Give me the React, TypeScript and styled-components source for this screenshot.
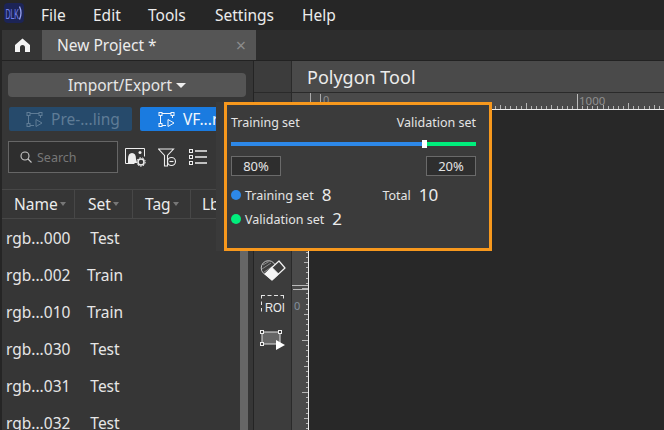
import * as React from 'react';
import styled, { createGlobalStyle } from 'styled-components';

const Global = createGlobalStyle`
  html, body { margin: 0; padding: 0; background: #252525; }
  * { box-sizing: border-box; }
`;

const Page = styled.div`
  position: relative;
  width: 664px;
  height: 430px;
  overflow: hidden;
  display: flex;
  flex-direction: column;
  background: #252525;
  color: #e6e6e6;
  font-family: "Noto Sans", "Liberation Sans", sans-serif;
`;

const MenuBar = styled.div`
  height: 30px;
  flex: none;
  display: flex;
  align-items: center;
  padding: 0 0 1px 4px;
  background: #262626;
`;
const MenuItem = styled.span<{ $w: number }>`
  width: ${p => p.$w}px;
  font-size: 15.5px;
  color: #ececec;
`;
const LogoBox = styled.div`
  width: 37px;
  height: 20px;
  margin-top: -3px;
  display: flex;
`;

const TabBar = styled.div`
  height: 31px;
  flex: none;
  display: flex;
  margin-left: 2px;
  background: #2d2d2d;
  border-bottom: 1px solid #222;
`;
const HomeTab = styled.div`
  width: 40px;
  display: flex;
  align-items: center;
  justify-content: center;
  background: #353535;
`;
const ProjectTab = styled.div`
  width: 214px;
  display: flex;
  align-items: center;
  justify-content: space-between;
  padding: 0 10px 0 15px;
  background: #555;
  font-size: 15.5px;
  color: #ececec;
`;
const Close = styled.span`
  font-size: 18px;
  color: #8c8c8c;
  line-height: 1;
`;

const Main = styled.div`
  flex: 1;
  min-height: 0;
  display: flex;
  padding-left: 2px;
`;

const LeftPanel = styled.div`
  width: 251px;
  flex: none;
  display: flex;
  flex-direction: column;
  background: #363636;
`;
const ImportButton = styled.div`
  height: 24px;
  margin: 12px 7px 0 6px;
  display: flex;
  align-items: center;
  justify-content: center;
  gap: 4px;
  border-radius: 4px;
  background: #555;
  font-size: 15.5px;
  color: #e6e6e6;
`;
const Caret = styled.span`
  width: 0;
  height: 0;
  margin-top: 1px;
  border-left: 5px solid transparent;
  border-right: 5px solid transparent;
  border-top: 5px solid #eee;
`;
const ModeRow = styled.div`
  display: flex;
  gap: 8px;
  margin: 10px 7px 0 7px;
`;
const ModeButton = styled.div<{ $on?: boolean }>`
  height: 24px;
  display: flex;
  align-items: center;
  gap: 8px;
  padding-left: ${p => (p.$on ? '18px' : '17px')};
  flex: ${p => (p.$on ? '1' : 'none')};
  width: ${p => (p.$on ? 'auto' : '123px')};
  border-radius: 2px;
  font-size: 15.5px;
  background: ${p => (p.$on ? '#1a7be0' : '#264a6b')};
  color: ${p => (p.$on ? '#f2f6fb' : '#5f7c96')};
`;
const ToolRow = styled.div`
  display: flex;
  align-items: center;
  margin: 10px 0 0 6px;
`;
const SearchBox = styled.div`
  width: 110px;
  height: 32px;
  display: flex;
  align-items: center;
  gap: 5px;
  padding-left: 11px;
  border: 1px solid #666;
  background: #2e2e2e;
  font-size: 12.5px;
  color: #777;
  margin-right: 7px;
`;
const ToolIcon = styled.svg`
  flex: none;
  margin-right: 12px;
`;

const TableWrap = styled.div`
  flex: 1;
  min-height: 0;
  margin-top: 16px;
  display: flex;
`;
const Table = styled.div`
  width: 238px;
  flex: none;
  display: flex;
  flex-direction: column;
`;
const ScrollTrack = styled.div`
  width: 8px;
  flex: none;
  background: #666;
`;
const HeadRow = styled.div`
  height: 30px;
  flex: none;
  display: flex;
  border-top: 1px solid #474747;
  border-bottom: 1px solid #474747;
`;
const HeadCell = styled.div<{ $w: number; $pad: number }>`
  width: ${p => p.$w}px;
  flex: none;
  display: flex;
  align-items: center;
  gap: 2px;
  padding-left: ${p => p.$pad}px;
  border-right: 1px solid #474747;
  font-size: 15.5px;
  color: #ececec;
  overflow: hidden;
`;
const SortMark = styled.span`
  width: 0;
  height: 0;
  border-left: 3px solid transparent;
  border-right: 3px solid transparent;
  border-top: 4px solid #777;
`;
const Row = styled.div`
  height: 37px;
  flex: none;
  display: flex;
  align-items: center;
  font-size: 15.5px;
  color: #e6e6e6;
`;
const NameCell = styled.span`
  width: 73px;
  padding-left: 4px;
`;
const SetCell = styled.span`
  width: 60px;
  text-align: center;
`;

const Divider = styled.div`
  width: 1px;
  flex: none;
  background: #242424;
`;

const ToolColumn = styled.div`
  width: 38px;
  flex: none;
  display: flex;
  flex-direction: column;
  align-items: center;
  background: #3c3c3c;
  border-right: 1px solid #2a2a2a;
`;
const ToolHead = styled.div`
  height: 32px;
  width: 100%;
  flex: none;
  border-bottom: 1px solid #2a2a2a;
`;
const ToolStack = styled.div`
  margin-top: 167px;
  display: flex;
  flex-direction: column;
  align-items: center;
  gap: 14px;
`;

const Editor = styled.div`
  flex: 1;
  min-width: 0;
  display: flex;
  flex-direction: column;
`;
const TitleBar = styled.div`
  height: 32px;
  flex: none;
  display: flex;
  align-items: center;
  padding-left: 15px;
  background: #4a4a4a;
  border-bottom: 1px solid #2a2a2a;
  font-size: 18px;
  color: #ececec;
`;
const RulerTop = styled.svg`
  display: block;
  flex: none;
`;
const CanvasRow = styled.div`
  flex: 1;
  min-height: 0;
  display: flex;
`;
const RulerSide = styled.svg`
  display: block;
  flex: none;
`;
const Canvas = styled.div`
  flex: 1;
  background: #282828;
`;

const Popup = styled.div`
  position: absolute;
  left: 216px;
  top: 102px;
  width: 276px;
  height: 149px;
  padding-left: 8px;
  background: #3a3a3a;
`;
const PopupInner = styled.div`
  height: 100%;
  padding: 9px 13px 0 4px;
  border: 3px solid #f7981d;
  background: #3b3b3b;
  font-size: 12.5px;
  color: #e4e4e4;
`;
const SplitLabels = styled.div`
  display: flex;
  justify-content: space-between;
  height: 17px;
  line-height: 17px;
`;
const Slider = styled.div`
  position: relative;
  display: flex;
  height: 4px;
  margin-top: 11px;
`;
const SliderPart = styled.div<{ $c: string; $w: number }>`
  height: 4px;
  width: ${p => p.$w}%;
  background: ${p => p.$c};
`;
const Thumb = styled.div`
  position: absolute;
  left: 191px;
  top: -2px;
  width: 5px;
  height: 8px;
  background: #fff;
`;
const PercentRow = styled.div`
  display: flex;
  justify-content: space-between;
  margin-top: 10px;
`;
const PercentBox = styled.div`
  width: 50px;
  height: 20px;
  display: flex;
  align-items: center;
  justify-content: center;
  border: 1px solid #6a6a6a;
  background: #2e2e2e;
  font-size: 13px;
`;
const StatRow = styled.div`
  display: flex;
  align-items: center;
  height: 24px;
`;
const Dot = styled.span<{ $c: string }>`
  width: 10px;
  height: 10px;
  border-radius: 50%;
  background: ${p => p.$c};
  margin-right: 4px;
`;
const StatNum = styled.span`
  font-size: 17px;
  line-height: 20px;
  margin-left: 8px;
  color: #ececec;
`;
const TotalLabel = styled.span`
  margin-left: 51px;
`;
const StatBlock = styled.div`
  margin-top: 7px;
`;

const rows = [
  ['rgb...000', 'Test'],
  ['rgb...002', 'Train'],
  ['rgb...010', 'Train'],
  ['rgb...030', 'Test'],
  ['rgb...031', 'Test'],
  ['rgb...032', 'Test'],
];

const Logo = () => (
  <svg width="20" height="20" viewBox="0 0 20 20">
    <rect width="20" height="20" rx="4" fill="#1c2456" />
    <text x="1.500" y="15.500" fontSize="15" fontFamily="Liberation Sans" fill="#7482ee" textLength="13.500" lengthAdjust="spacingAndGlyphs">DLK</text>
    <path d="M15.500 3.500q3 6.500 0 13" stroke="#98a2f0" strokeWidth="1.300" fill="none" />
  </svg>
);

const HomeIcon = () => (
  <svg width="15" height="14" viewBox="0 0 15 14">
    <path d="M7.500 0.500 15 7v7H10V9.500a2.500 2.500 0 0 0-5 0V14H0V7Z" fill="#f4f4f4" />
  </svg>
);

const NodeShape = ({ c }: { c: string }) => (
  <svg width="17" height="15" viewBox="0 0 17 15" fill="none" stroke={c} strokeWidth="1">
    <path d="M2.500 3v9M4 1.500h9M14.500 3v3M4 13.500h4" />
    <rect x="1" y="0.500" width="3" height="3" />
    <rect x="13" y="0.500" width="3" height="3" />
    <rect x="1" y="11.500" width="3" height="3" />
    <path d="M10 7.500l6 3.500-6 3.500Z" />
  </svg>
);

// top ruler ticks run out from the 1000 mark at x=285.5
const ticksTop = () => {
  const out: React.ReactNode[] = [];
  for (let k = -52; k < 18; k++) {
    const x = Math.round(285 + k * 5.12) + 0.5;
    if (k === 0 || x < 17) continue;
    const h = k % 10 === 0 ? 6 : k % 5 === 0 ? 4 : 3;
    out.push(<line key={k} x1={x} x2={x} y1={16 - h} y2={16} stroke="#b5b5b5" />);
  }
  return out;
};

const ticksSide = () => {
  const out: React.ReactNode[] = [];
  for (let k = -44; k < 20; k++) {
    const y = Math.round(230 + k * 5.2) + 0.5;
    const w = k % 10 === 0 ? 6 : k % 5 === 0 ? 4 : 2;
    out.push(<line key={k} x1={16 - w} x2={16} y1={y} y2={y} stroke="#b5b5b5" />);
  }
  return out;
};

export default function App() {
  return (
    <Page>
      <Global />
      <MenuBar>
        <LogoBox><Logo /></LogoBox>
        <MenuItem $w={52}>File</MenuItem>
        <MenuItem $w={55}>Edit</MenuItem>
        <MenuItem $w={67}>Tools</MenuItem>
        <MenuItem $w={87}>Settings</MenuItem>
        <MenuItem $w={40}>Help</MenuItem>
      </MenuBar>
      <TabBar>
        <HomeTab><HomeIcon /></HomeTab>
        <ProjectTab>
          New Project *
          <Close>×</Close>
        </ProjectTab>
      </TabBar>
      <Main>
        <LeftPanel>
          <ImportButton>Import/Export <Caret /></ImportButton>
          <ModeRow>
            <ModeButton>
              <NodeShape c="#5f7c96" />
              Pre-...ling
            </ModeButton>
            <ModeButton $on>
              <NodeShape c="#f2f6fb" />
              VF...ring
            </ModeButton>
          </ModeRow>
          <ToolRow>
            <SearchBox>
              <svg width="12" height="12" viewBox="0 0 12 12" fill="none" stroke="#c8c8c8" strokeWidth="1.100">
                <circle cx="5" cy="5" r="4" />
                <path d="M8 8l3.500 3.500" />
              </svg>
              Search
            </SearchBox>
            <ToolIcon width="21" height="19" viewBox="0 0 21 19">
              <path d="M.5 15.500V.5h19v8" fill="none" stroke="#eee" />
              <path d="M.5 15.500h9" stroke="#eee" />
              <path d="M3 15V11q0-6 4-6t4 6l1 4Z" fill="#eee" />
              <circle cx="15" cy="4.500" r="1.500" fill="#eee" />
              <circle cx="16" cy="14" r="3" fill="none" stroke="#eee" strokeWidth="1.500" />
              <circle cx="16" cy="14" r="4.300" fill="none" stroke="#eee" strokeDasharray="1.500 1.500" />
            </ToolIcon>
            <ToolIcon width="19" height="19" viewBox="0 0 19 19" fill="none" stroke="#eee" strokeWidth="1.100">
              <path d="M.5 1h15L9.500 7.500v10.500H6.500V7.500Z" />
              <circle cx="13.500" cy="13.500" r="4" />
              <path d="M11.500 13.500h4" />
            </ToolIcon>
            <ToolIcon width="18" height="16" viewBox="0 0 18 16" fill="none" stroke="#eee">
              <rect x="0.500" y="0.500" width="3" height="3" />
              <rect x="0.500" y="6.500" width="3" height="3" />
              <rect x="0.500" y="12.500" width="3" height="3" />
              <path d="M6 2h12M6 8h12M6 14h12" strokeWidth="1.500" />
            </ToolIcon>
          </ToolRow>
          <TableWrap>
            <Table>
              <HeadRow>
                <HeadCell $w={73} $pad={12}>Name <SortMark /></HeadCell>
                <HeadCell $w={58} $pad={13}>Set <SortMark /></HeadCell>
                <HeadCell $w={58} $pad={12}>Tag <SortMark /></HeadCell>
                <HeadCell $w={49} $pad={11}>Lb</HeadCell>
              </HeadRow>
              {rows.map(r => (
                <Row key={r[0]}>
                  <NameCell>{r[0]}</NameCell>
                  <SetCell>{r[1]}</SetCell>
                </Row>
              ))}
            </Table>
            <ScrollTrack />
          </TableWrap>
        </LeftPanel>
        <Divider />
        <ToolColumn>
          <ToolHead />
          <ToolStack>
            <svg width="26" height="21" viewBox="0 0 26 21">
              <circle cx="8.500" cy="8" r="7.300" fill="none" stroke="#c4c4c4" />
              <path d="M3 5l6-3.500M2 9l9-6M3.500 12.500 13 6M7 14l7-5" stroke="#8a8a8a" />
              <path d="M19 1l6 7-13 12-7-6Z" fill="#3c3c3c" stroke="#f2f2f2" strokeWidth="1.200" strokeLinejoin="round" />
              <path d="M5 14l7-6.500 6.500 6.500-6.500 6Z" fill="#f6f6f6" stroke="#f6f6f6" strokeLinejoin="round" />
            </svg>
            <svg width="25" height="21" viewBox="0 0 25 21">
              <path d="M1 .5h22" stroke="#e4e4e4" strokeDasharray="4 2.500" />
              <path d="M23.500 0v5M1.500 0v19" stroke="#e4e4e4" strokeDasharray="3.500 3" />
              <text x="5" y="17" fontSize="12.500" fontFamily="Liberation Sans" fill="#eee" textLength="20" lengthAdjust="spacingAndGlyphs">ROI</text>
            </svg>
            <svg width="26" height="20" viewBox="0 0 26 20">
              <rect x="2" y="2" width="18" height="12" fill="#666" stroke="#ddd" />
              <rect x="0.500" y="0.500" width="3" height="3" fill="#3c3c3c" stroke="#eee" />
              <rect x="18.500" y="0.500" width="3" height="3" fill="#3c3c3c" stroke="#eee" />
              <rect x="0.500" y="12.500" width="3" height="3" fill="#3c3c3c" stroke="#eee" />
              <path d="M16 10l9 5-9 5Z" fill="#fff" />
            </svg>
          </ToolStack>
        </ToolColumn>
        <Editor>
          <TitleBar>Polygon Tool</TitleBar>
          <RulerTop width="372" height="17" viewBox="0 0 372 17">
            <rect width="372" height="17" fill="#4a4a4a" />
            <line x1="18.500" x2="18.500" y1="0" y2="16" stroke="#aaa" />
            <line x1="28.500" x2="28.500" y1="1" y2="16" stroke="#aaa" />
            <text x="31" y="11" fontSize="11" fontFamily="Noto Sans" fill="#8f8f8f">0</text>
            <line x1="285.500" x2="285.500" y1="1" y2="16" stroke="#bbb" />
            <text x="287" y="12" fontSize="11.500" fontFamily="Noto Sans" fill="#8f8f8f">1000</text>
            <line x1="17" x2="372" y1="16.500" y2="16.500" stroke="#eee" />
            {ticksTop()}
          </RulerTop>
          <CanvasRow>
            <RulerSide width="17" height="320" viewBox="0 0 17 320">
              <rect width="17" height="320" fill="#4a4a4a" />
              {ticksSide()}
              <line x1="0" x2="16" y1="175.500" y2="175.500" stroke="#bbb" />
              <line x1="1" x2="16" y1="179.500" y2="179.500" stroke="#bbb" />
              <line x1="16.500" x2="16.500" y1="0" y2="320" stroke="#eee" />
              <text x="2" y="200" fontSize="11" fontFamily="Noto Sans" fill="#83909c">0</text>
            </RulerSide>
            <Canvas />
          </CanvasRow>
        </Editor>
      </Main>
      <Popup>
        <PopupInner>
          <SplitLabels>
            <span>Training set</span>
            <span>Validation set</span>
          </SplitLabels>
          <Slider>
            <SliderPart $c="#2d88e8" $w={79} />
            <SliderPart $c="#00ee7c" $w={21} />
            <Thumb />
          </Slider>
          <PercentRow>
            <PercentBox>80%</PercentBox>
            <PercentBox>20%</PercentBox>
          </PercentRow>
          <StatBlock>
            <StatRow>
              <Dot $c="#2d88e8" />
              Training set
              <StatNum>8</StatNum>
              <TotalLabel>Total</TotalLabel>
              <StatNum>10</StatNum>
            </StatRow>
            <StatRow>
              <Dot $c="#00ee7c" />
              Validation set
              <StatNum>2</StatNum>
            </StatRow>
          </StatBlock>
        </PopupInner>
      </Popup>
    </Page>
  );
}
